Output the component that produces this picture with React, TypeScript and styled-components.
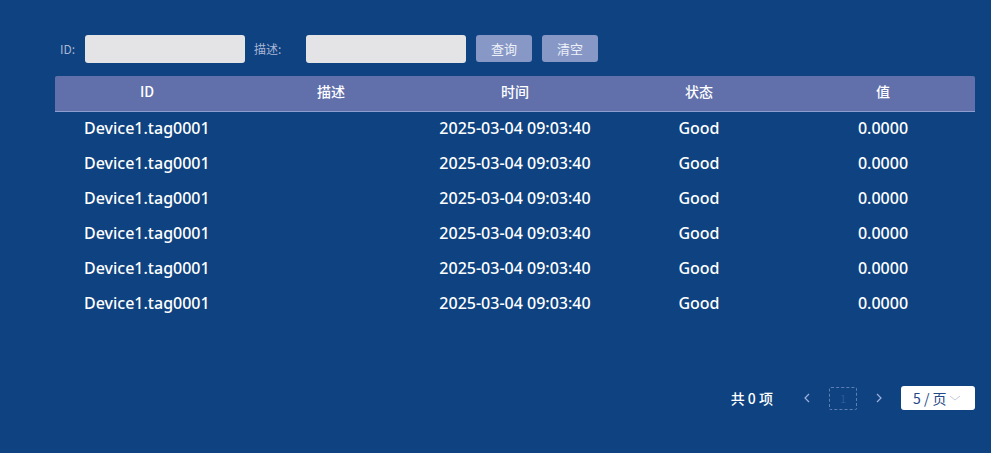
import React from "react";
import styled, { createGlobalStyle } from "styled-components";

const Global = createGlobalStyle`
  html, body { margin: 0; padding: 0; background: #0e4280; }
  body { font-family: "Noto Sans", "Noto Sans CJK SC", sans-serif; }
  * { box-sizing: border-box; }
`;

const Page = styled.div`
  width: 991px;
  height: 453px;
  background: #0e4280;
  padding: 34px 16px 0 55px;
  display: flex;
  flex-direction: column;
`;

const SearchBar = styled.div`
  display: flex;
  align-items: center;
  height: 29px;
  padding-left: 5px;
`;

const Label = styled.span<{ $w: number }>`
  width: ${(p) => p.$w}px;
  color: #a9b6d6;
  font-size: 12px;
  font-family: "Noto Sans CJK SC", sans-serif;
`;

const Input = styled.input`
  width: 160px;
  height: 28px;
  border: none;
  border-radius: 3px;
  background: #e4e4e6;
  outline: none;
  margin-right: 9px;
`;

const Btn = styled.button`
  width: 56px;
  height: 27px;
  border: none;
  border-radius: 3px;
  background: #8797c6;
  color: #eef1f8;
  font-family: "Noto Sans CJK SC", sans-serif;
  font-size: 13px;
  margin-left: 1px;
  margin-right: 9px;
  padding: 0;
`;

const Table = styled.div`
  margin-top: 13px;
  width: 920px;
`;

const HeadRow = styled.div`
  display: grid;
  grid-template-columns: repeat(5, 1fr);
  height: 36px;
  padding-bottom: 5px;
  background: #6170ab;
  border-radius: 2px 2px 0 0;
  border-bottom: 1px solid #8d9dd0;
  align-items: center;
`;

const HeadCell = styled.div`
  text-align: center;
  color: #ffffff;
  font-size: 14px;
  font-weight: 500;
  font-family: "Noto Sans CJK SC", sans-serif;
`;

const Row = styled.div`
  display: grid;
  grid-template-columns: repeat(5, 1fr);
  height: 35px;
  align-items: center;
`;

const Cell = styled.div<{ $left?: boolean }>`
  text-align: ${(p) => (p.$left ? "left" : "center")};
  padding-left: ${(p) => (p.$left ? "29px" : "0")};
  color: #ffffff;
  font-size: 16px;
  font-weight: 500;
`;

const Body = styled.div`
  margin-top: -2px;
`;

const Pager = styled.div`
  margin-top: 66px;
  display: flex;
  align-items: center;
  justify-content: flex-end;
  color: #ffffff;
  font-size: 13px;
  font-family: "Noto Sans CJK SC", sans-serif;
`;

const Total = styled.span`
  margin-right: 22px;
  font-weight: 500;
  font-size: 14px;
`;

const Arrow = styled.span`
  width: 24px;
  display: flex;
  justify-content: center;
  color: #9fb2dc;
`;

const PageBox = styled.div`
  width: 28px;
  height: 23px;
  border: 1px dashed #5d7fb5;
  border-radius: 2px;
  margin: 0 10px;
  color: #2c5a96;
  font-size: 11px;
  display: flex;
  align-items: center;
  justify-content: center;
`;

const Select = styled.div`
  margin-left: 10px;
  width: 74px;
  height: 24px;
  background: #ffffff;
  border-radius: 3px;
  display: flex;
  align-items: center;
  padding-left: 12px;
  gap: 2px;
  color: #1f4a86;
  font-size: 14px;
`;

const rows = Array.from({ length: 6 });

export default function App() {
  return (
    <>
      <Global />
      <Page>
        <SearchBar>
          <Label $w={25}>ID:</Label>
          <Input />
          <Label $w={52}>描述:</Label>
          <Input />
          <Btn>查询</Btn>
          <Btn>清空</Btn>
        </SearchBar>
        <Table>
          <HeadRow>
            <HeadCell>ID</HeadCell>
            <HeadCell>描述</HeadCell>
            <HeadCell>时间</HeadCell>
            <HeadCell>状态</HeadCell>
            <HeadCell>值</HeadCell>
          </HeadRow>
          <Body>
            {rows.map((_, i) => (
              <Row key={i}>
                <Cell $left>Device1.tag0001</Cell>
                <Cell></Cell>
                <Cell>2025-03-04 09:03:40</Cell>
                <Cell>Good</Cell>
                <Cell>0.0000</Cell>
              </Row>
            ))}
          </Body>
        </Table>
        <Pager>
          <Total>共 0 项</Total>
          <Arrow>
            <svg width="8" height="10" viewBox="0 0 8 10">
              <path d="M6 1 L2 5 L6 9" stroke="currentColor" strokeWidth="1.2" fill="none" />
            </svg>
          </Arrow>
          <PageBox>1</PageBox>
          <Arrow>
            <svg width="8" height="10" viewBox="0 0 8 10">
              <path d="M2 1 L6 5 L2 9" stroke="currentColor" strokeWidth="1.2" fill="none" />
            </svg>
          </Arrow>
          <Select>
            <span>5 / 页</span>
            <svg width="12" height="8" viewBox="0 0 12 8">
              <path d="M1 2 L6 6 L11 2" stroke="#c5ccd8" strokeWidth="1" fill="none" />
            </svg>
          </Select>
        </Pager>
      </Page>
    </>
  );
}
